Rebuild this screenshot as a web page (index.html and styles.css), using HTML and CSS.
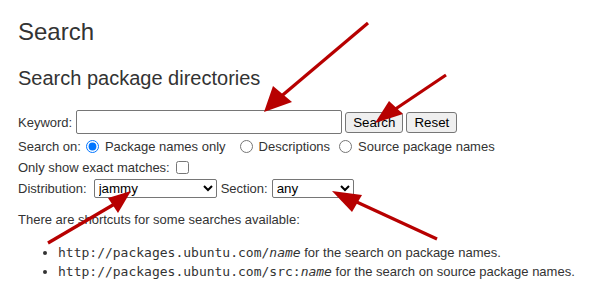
FILE: index.html
```
<!DOCTYPE html>
<html lang="en">
<head>
  <meta charset="UTF-8" />
  <title>Search</title>
  <link rel="stylesheet" href="styles.css">
</head>
<body>
  <h1>Search</h1>
  <h2>Search package directories</h2>

  <form class="search-form">
    <div class="row keyword-row">
      <label for="keyword">Keyword:</label>
      <input type="text" id="keyword" class="keyword">
      <button type="submit">Search</button>
      <button type="reset">Reset</button>
    </div>
    <div class="row">
      Search on:
      <input type="radio" name="searchon" id="on-names" checked>
      <label for="on-names">Package names only</label>
      <input type="radio" name="searchon" id="on-desc" class="gap">
      <label for="on-desc">Descriptions</label>
      <input type="radio" name="searchon" id="on-src">
      <label for="on-src">Source package names</label>
    </div>
    <div class="row">
      <label for="exact">Only show exact matches:</label>
      <input type="checkbox" id="exact">
    </div>
    <div class="row dist-row">
      <label for="suite" class="dist-label">Distribution:</label>
      <select id="suite" class="suite">
        <option>jammy</option>
        <option>focal</option>
      </select>
      <label for="section">Section:</label>
      <select id="section" class="section">
        <option>any</option>
        <option>main</option>
      </select>
    </div>
  </form>

  <p class="hint">There are shortcuts for some searches available:</p>
  <ul class="shortcuts">
    <li><code>http://packages.ubuntu.com/<em>name</em></code> for the search on package names.</li>
    <li><code>http://packages.ubuntu.com/src:<em>name</em></code> for the search on source package names.</li>
  </ul>

  <!-- annotation arrows drawn over the page -->
  <svg class="arrows" width="589" height="291" viewBox="0 0 589 291">
    <g stroke="#b70000" stroke-width="3.2" stroke-linecap="butt" fill="#b70000">
      <line x1="368" y1="23" x2="278" y2="99" />
      <polygon points="264,112 273,86 292,102" stroke="none" />
      <line x1="446" y1="75" x2="388" y2="114" />
      <polygon points="375,123 389,101 403,114" stroke="none" />
      <line x1="48" y1="243" x2="118" y2="202" />
      <polygon points="131,191 108,198 118,213" stroke="none" />
      <line x1="437" y1="239" x2="348" y2="198" />
      <polygon points="332,191 362,195 352,212" stroke="none" />
    </g>
  </svg>
</body>
</html>
```

FILE: styles.css
```
body {
  font-family: "Liberation Sans", Arial, sans-serif;
  font-size: 13px;
  color: #333;
  background: #fff;
  margin: 0;
  padding: 0 8px 0 18px;
  position: relative;
}
h1 {
  font-size: 24px;
  font-weight: normal;
  margin: 17px 0 0;
  line-height: 30px;
}
h2 {
  font-size: 20px;
  font-weight: normal;
  margin: 18px 0 0;
  line-height: 26px;
}
.search-form {
  margin-top: 19px;
}
.row {
  display: flex;
  align-items: center;
  white-space: nowrap;
  min-height: 21px;
}
.keyword-row {
  margin-bottom: 2px;
}
.dist-row {
  min-height: 20px;
}
.row label {
  margin-right: 4px;
}
.row .dist-label {
  margin-right: 7px;
}
.keyword {
  width: 266px;
  height: 24px;
  box-sizing: border-box;
  margin: 0 3px 0 0;
  border: 1px solid #767676;
  border-radius: 2px;
}
button {
  font-family: "Liberation Sans", Arial, sans-serif;
  font-size: 13.33px;
  height: 21px;
  padding: 0 7px;
  margin: 0 3px 0 0;
  background: #efefef;
  border: 1px solid #767676;
  border-radius: 3px;
  color: #000;
}
input[type=radio] {
  margin: 0 6px 0 5px;
}
input[type=radio].gap {
  margin-left: 10px;
}
input[type=checkbox] {
  margin: 0 0 0 2px;
}
select {
  font-family: "Liberation Sans", Arial, sans-serif;
  font-size: 13.33px;
  height: 19px;
  margin: 0 4px 0 0;
  border: 1px solid #767676;
  border-radius: 2px;
  background: #fff;
  color: #000;
}
.suite {
  width: 123px;
}
.section {
  width: 82px;
}
.hint {
  margin: 14px 0 0;
  line-height: 16px;
}
.shortcuts {
  margin: 15px 0 0;
  padding-left: 40px;
  line-height: 19px;
}
code {
  font-family: "DejaVu Sans Mono", monospace;
  font-size: 13px;
}
.arrows {
  position: absolute;
  top: 0;
  left: 0;
  pointer-events: none;
}
```
